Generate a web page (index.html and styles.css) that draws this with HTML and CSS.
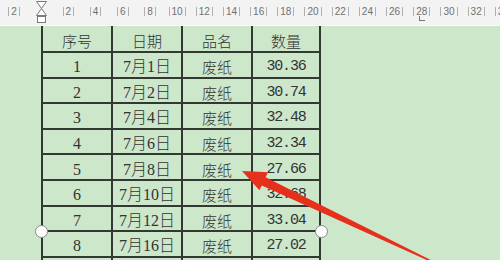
FILE: index.html
```html
<!DOCTYPE html>
<html lang="zh">
<head>
<meta charset="utf-8">
<title>表格</title>
<link rel="stylesheet" href="styles.css">
</head>
<body>
<div class="ruler">
  <div class="marks">
    <span class="mk"><i>2</i></span>
    <span class="mk origin">
      <svg class="hourglass" width="13" height="24" viewBox="0 0 13 24"><path d="M1.5 1.5 H11.5 L6.5 8.5 L11.5 15.5 H1.5 L6.5 8.5 Z" fill="#fff" stroke="#7a7a7a" stroke-width="1"/><rect x="2.5" y="16.5" width="8" height="6" fill="#fff" stroke="#7a7a7a" stroke-width="1"/></svg>
    </span>
    <span class="mk"><i>2</i></span>
    <span class="mk"><i>4</i></span>
    <span class="mk"><i>6</i></span>
    <span class="mk"><i>8</i></span>
    <span class="mk"><i>10</i></span>
    <span class="mk"><i>12</i></span>
    <span class="mk"><i>14</i></span>
    <span class="mk"><i>16</i></span>
    <span class="mk"><i>18</i></span>
    <span class="mk"><i>20</i></span>
    <span class="mk"><i>22</i></span>
    <span class="mk"><i>24</i></span>
    <span class="mk"><i>26</i></span>
    <span class="mk tab"><i>28</i><b class="tabstop"></b></span>
    <span class="mk"><i>30</i></span>
    <span class="mk"><i>32</i></span>
    <span class="mk"><i>34</i></span>
  </div>
</div>
<div class="sheet">
  <table class="grid">
    <colgroup><col class="c1"><col class="c2"><col class="c3"><col class="c4"></colgroup>
    <thead>
      <tr class="head"><th>序号</th><th>日期</th><th>品名</th><th>数量</th></tr>
    </thead>
    <tbody>
      <tr><td class="n">1</td><td class="d">7月1日</td><td>废纸</td><td class="q">30.36</td></tr>
      <tr><td class="n">2</td><td class="d">7月2日</td><td>废纸</td><td class="q">30.74</td></tr>
      <tr><td class="n">3</td><td class="d">7月4日</td><td>废纸</td><td class="q">32.48</td></tr>
      <tr><td class="n">4</td><td class="d">7月6日</td><td>废纸</td><td class="q">32.34</td></tr>
      <tr><td class="n">5</td><td class="d">7月8日</td><td>废纸</td><td class="q">27.66</td></tr>
      <tr><td class="n">6</td><td class="d">7月10日</td><td>废纸</td><td class="q">32.68</td></tr>
      <tr><td class="n">7</td><td class="d">7月12日</td><td>废纸</td><td class="q">33.04</td></tr>
      <tr><td class="n">8</td><td class="d">7月16日</td><td>废纸</td><td class="q">27.02</td></tr>
      <tr><td class="n"></td><td class="d"></td><td></td><td class="q"></td></tr>
    </tbody>
  </table>
  <span class="handle left"></span>
  <span class="handle right"></span>
</div>
<svg class="arrow" width="500" height="260" viewBox="0 0 500 260">
  <polygon points="242,171 268,172.3 265.6,177.2 433.3,261.3 432.7,262.7 261.8,185.4 259.4,190.3" fill="#e5301c"/>
</svg>
</body>
</html>
```
FILE: styles.css
```css
html, body {
  margin: 0;
  padding: 0;
}
body {
  width: 500px;
  height: 260px;
  overflow: hidden;
  position: relative;
  background: #cde7cb;
}
.ruler {
  height: 25px;
  background: #f3f3f3;
  border-bottom: 1px solid #fbfbfb;
  overflow: hidden;
}
.marks {
  display: flex;
  padding-left: 0.4px;
  height: 25px;
  align-items: flex-start;
}
.mk {
  flex: none;
  width: 27.2px;
  height: 25px;
  display: flex;
  justify-content: center;
  position: relative;
}
.mk i {
  font-style: normal;
  font-family: "Liberation Sans", Arial, sans-serif;
  font-size: 10px;
  line-height: 9px;
  color: #707070;
  margin-top: 7px;
  padding: 0 2px;
  height: 9px;
  border-left: 1px solid #b0b0b0;
  border-right: 1px solid #b0b0b0;
}
.hourglass {
  display: block;
}
.tabstop {
  position: absolute;
  left: 11px;
  top: 16px;
  width: 5px;
  height: 4px;
  border-left: 1px solid #777;
  border-bottom: 1px solid #777;
}
.sheet {
  position: relative;
  height: 234px;
  overflow: hidden;
  padding-left: 41px;
}
.grid {
  border-collapse: separate;
  border-spacing: 0;
  table-layout: fixed;
  width: 280px;
  border-left: 2px solid #323832;
  color: #333;
}
.c1 { width: 70px; }
.c2 { width: 70px; }
.c3 { width: 70px; }
.c4 { width: 68px; }
.grid th, .grid td {
  box-sizing: border-box;
  border-right: 2px solid #323832;
  border-bottom: 2px solid #323832;
  padding: 5px 0 0 0;
  text-align: center;
  vertical-align: middle;
  font-weight: 300;
  font-family: "Noto Sans CJK SC", sans-serif;
  font-size: 15px;
  line-height: 16px;
  height: 25.6px;
  white-space: nowrap;
}
.grid .head th {
  height: 27px;
}
.grid td.n, .grid td.d {
  font-family: "Liberation Serif", "Noto Sans CJK SC", serif;
  font-size: 16px;
}
.grid td.q {
  font-family: "Liberation Mono", monospace;
  font-size: 15px;
  letter-spacing: -1.2px;
}
.handle {
  position: absolute;
  top: 199px;
  width: 11px;
  height: 11px;
  border-radius: 50%;
  background: #fff;
  border: 1px solid #8a8a8a;
}
.handle.left { left: 35px; }
.handle.right { left: 315px; }
.arrow {
  position: absolute;
  left: 0;
  top: 0;
  pointer-events: none;
}
```
